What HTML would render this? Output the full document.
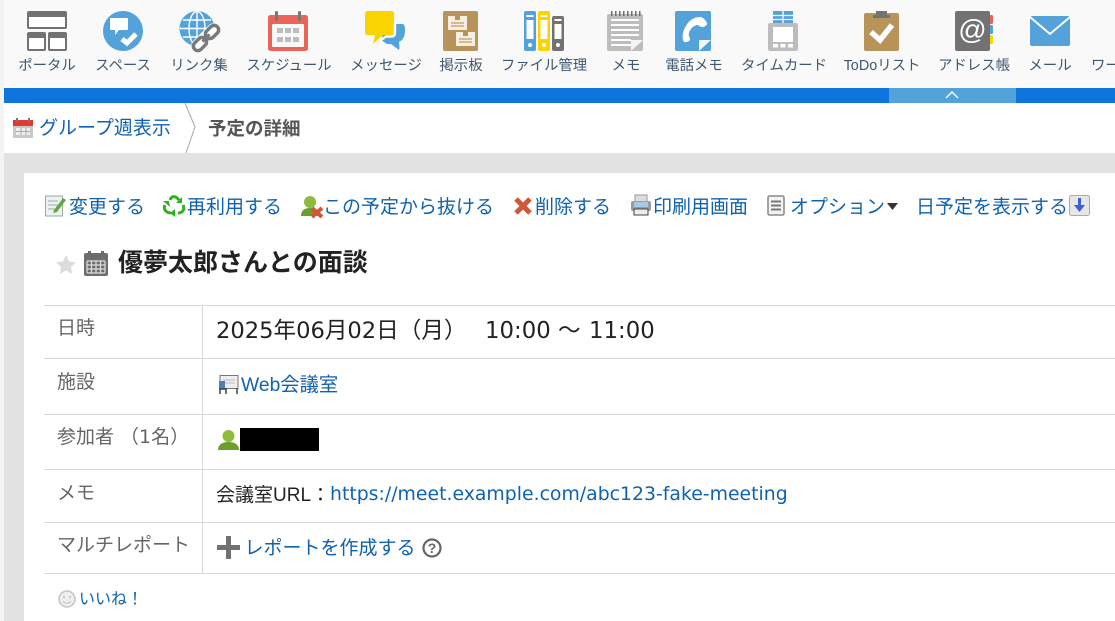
<!DOCTYPE html>
<html lang="ja"><head><meta charset="utf-8"><title>予定の詳細</title>
<style>
html,body{margin:0;padding:0;width:1115px;height:621px;overflow:hidden;background:#fff}
body{position:relative;font-family:"Liberation Sans","Noto Sans CJK JP",sans-serif}
.a{position:absolute}
.t{position:absolute;white-space:nowrap;line-height:1}
.n{font-size:14.4px;color:#3f5870;top:59px;transform:translateX(-50%)}
.l{color:#0f62b0}
.b{font-size:19px;top:198px;color:#0f62b0}
.h{font-size:19px;color:#666;left:57px}
.r{position:absolute;left:44px;width:1071px;height:1px;background:#d9d9d9}
.d{font-family:"DejaVu Sans","Noto Sans CJK JP",sans-serif}
svg{position:absolute;overflow:visible}
</style></head><body>
<div class="a" style="left:0;top:0;width:4px;height:621px;background:#f4f4f4"></div>
<div class="a" style="left:4px;top:0;width:1111px;height:88px;background:#f9f9f9"></div>
<div class="a" style="left:4px;top:88px;width:1111px;height:15px;background:#0e74de"></div>
<div class="a" style="left:889px;top:88px;width:127px;height:15px;background:#53a2da"></div>
<svg style="left:945px;top:90px" width="14" height="9"><path d="M1 8L7 2L13 8" fill="none" stroke="#fff" stroke-width="1.4"/></svg>
<div class="a" style="left:4px;top:153px;width:1111px;height:468px;background:#e2e2e2"></div>
<div class="a" style="left:24px;top:173px;width:1091px;height:448px;background:#fff"></div>

<!-- nav icons -->
<svg style="left:27px;top:11px" width="40" height="40"><rect width="40" height="18" rx="2" fill="#727272"/><rect x="2" y="6" width="36" height="10" fill="#fff"/><rect y="21" width="19" height="19" rx="2" fill="#727272"/><rect x="2" y="27" width="15" height="11" fill="#fff"/><rect x="21" y="21" width="19" height="19" rx="2" fill="#727272"/><rect x="23" y="27" width="15" height="11" fill="#fff"/></svg>
<svg style="left:103px;top:11px" width="40" height="40"><circle cx="20" cy="20" r="20" fill="#53a2da"/><path d="M8 7h16a1 1 0 0 1 1 1v10a1 1 0 0 1-1 1h-8l-4 5v-5H8a1 1 0 0 1-1-1V8a1 1 0 0 1 1-1z" fill="#fff"/><path d="M19 28l5 4 9-9" fill="none" stroke="#fff" stroke-width="5"/></svg>
<svg style="left:179px;top:11px" width="42" height="41"><circle cx="18" cy="17.500" r="17.500" fill="#53a2da"/><g fill="none" stroke="#fff" stroke-width="1.400"><ellipse cx="18" cy="17.500" rx="8" ry="17"/><path d="M18 0v35M1 17.500h34M4 9h28M4 26h28"/></g><g transform="rotate(-45 27 27)"><rect x="9" y="20" width="36" height="14" rx="7" fill="#fff"/><rect x="11" y="22.500" width="15" height="9" rx="4.500" fill="none" stroke="#7a7a7a" stroke-width="3.500"/><rect x="28" y="22.500" width="15" height="9" rx="4.500" fill="none" stroke="#7a7a7a" stroke-width="3.500"/><rect x="22" y="25.500" width="10" height="3" fill="#7a7a7a"/></g></svg>
<svg style="left:268px;top:11px" width="40" height="41"><rect y="4" width="40" height="36" rx="2.500" fill="#e9655a"/><rect x="4" y="13" width="32" height="23" rx="1" fill="#f8f8f8"/><rect x="7" y="0" width="3" height="10" rx="1.500" fill="#777"/><rect x="30" y="0" width="3" height="10" rx="1.500" fill="#777"/><g fill="#bdbdbd"><rect x="9" y="17" width="6" height="5"/><rect x="17" y="17" width="6" height="5"/><rect x="25" y="17" width="6" height="5"/><rect x="9" y="26" width="6" height="5"/><rect x="17" y="26" width="6" height="5"/><rect x="25" y="26" width="6" height="5"/></g></svg>
<svg style="left:365px;top:11px" width="41" height="41"><path d="M20 18l8-5h9c3 0 3 4 3 7 0 5-2 9-6 11 0 2 1 6 0 8l-8-6h-4l-6-4z" fill="#53a2da"/><path d="M3 0h23q3 0 3 3v18q0 3-3 3H18L8 33l2-9H3q-3 0-3-3V3q0-3 3-3z" fill="#f9d400"/><path d="M9 34L21 25.500h5q4 0 4-4V12" fill="none" stroke="#f9f9f9" stroke-width="2.500"/></svg>
<svg style="left:443px;top:11px" width="36" height="40"><rect width="35" height="40" rx="2" fill="#b8935a"/><rect x="5" y="5" width="19" height="14" fill="#f5efe1"/><path d="M12 5h5v4h-5z" fill="#b8935a"/><path d="M8 12h13M8 15h13" stroke="#c9a975" stroke-width="1.500"/><rect x="13" y="21" width="19" height="14" fill="#f5efe1"/><path d="M20 21h5v4h-5z" fill="#b8935a"/><path d="M16 28h13M16 31h13" stroke="#c9a975" stroke-width="1.500"/></svg>
<svg style="left:524px;top:11px" width="40" height="41"><rect width="12" height="40" rx="2" fill="#53a2da"/><rect x="14" width="12" height="40" rx="2" fill="#f9d400"/><rect x="28" y="5" width="12" height="35" rx="2" fill="#727272"/><g fill="#fff"><rect x="2.500" y="4" width="7" height="2"/><rect x="2.500" y="9" width="7" height="19"/><circle cx="6" cy="34" r="2"/><rect x="16.500" y="4" width="7" height="2"/><rect x="16.500" y="9" width="7" height="19"/><circle cx="20" cy="34" r="2"/><rect x="30.500" y="8" width="7" height="2"/><rect x="30.500" y="13" width="7" height="15"/><circle cx="34" cy="34" r="2"/></g></svg>
<svg style="left:607px;top:11px" width="36" height="41"><rect y="3" width="36" height="37" rx="2" fill="#bdbdbd"/><g fill="#6d6d6d"><rect x="4" y="0" width="1.500" height="5"/><rect x="8" y="0" width="1.500" height="5"/><rect x="12" y="0" width="1.500" height="5"/><rect x="16" y="0" width="1.500" height="5"/><rect x="20" y="0" width="1.500" height="5"/><rect x="24" y="0" width="1.500" height="5"/><rect x="28" y="0" width="1.500" height="5"/><rect x="32" y="0" width="1.500" height="5"/></g><path d="M4 9h28M4 14h28M4 19h28M4 24h28M4 29h20M4 34h20" stroke="#fff" stroke-width="2"/><path d="M24 29h12L24 40z" fill="#f4f4f4"/></svg>
<svg style="left:675px;top:11px" width="36" height="41"><rect width="36" height="40" rx="2" fill="#53a2da"/><path d="M25 6c-9 0-15 8-17 16-1 5 0 9 2 9 3 0 5-1 5-3 0-2-2-3-1-6 1-4 4-7 8-8 2 0 3 2 5 2 2 0 4-1 5-3 0-3-4-7-7-7z" fill="#fff"/><path d="M24 29h12L24 40z" fill="#f4f4f4"/></svg>
<svg style="left:768px;top:11px" width="30" height="41"><rect x="5" y="0" width="20" height="15" fill="#53a2da"/><path d="M15 0v14M5 4.500h20M5 8.500h20" stroke="#fff" stroke-width="1.300"/><rect y="12" width="30" height="28" rx="2" fill="#bdbdbd"/><rect x="5" y="16" width="20" height="15" fill="#fff"/><g fill="#fff"><rect x="5" y="33" width="5" height="3.500"/><rect x="12.500" y="33" width="5" height="3.500"/><rect x="20" y="33" width="5" height="3.500"/></g></svg>
<svg style="left:864px;top:11px" width="36" height="41"><rect y="2" width="35" height="38" rx="2" fill="#b8935a"/><path d="M12 4V0h11v4h3v3H9V4z" fill="#727272"/><path d="M7 21l9 8 12-15" fill="none" stroke="#fff" stroke-width="5.500"/></svg>
<svg style="left:955px;top:11px" width="38" height="41"><rect x="33" y="4" width="5" height="9" rx="1.500" fill="#e9655a"/><rect x="33" y="14" width="5" height="9" rx="1.500" fill="#53a2da"/><rect x="33" y="24" width="5" height="9" rx="1.500" fill="#f9d400"/><rect width="35" height="40" rx="2" fill="#727272"/><text x="17.500" y="28" font-family="Liberation Sans" font-size="28" fill="#fff" text-anchor="middle">@</text></svg>
<svg style="left:1030px;top:16px" width="40" height="30"><rect width="40" height="30" rx="2" fill="#53a2da"/><path d="M0 1l20 17L40 1" fill="none" stroke="#fff" stroke-width="2"/></svg>

<!-- nav labels -->
<span class="t n" style="left:47px">ポータル</span>
<span class="t n" style="left:123px">スペース</span>
<span class="t n" style="left:199px">リンク集</span>
<span class="t n" style="left:289px">スケジュール</span>
<span class="t n" style="left:386px">メッセージ</span>
<span class="t n" style="left:461px">掲示板</span>
<span class="t n" style="left:544px">ファイル管理</span>
<span class="t n" style="left:626px">メモ</span>
<span class="t n" style="left:694px">電話メモ</span>
<span class="t n" style="left:784px">タイムカード</span>
<span class="t n" style="left:882px">ToDoリスト</span>
<span class="t n" style="left:974px">アドレス帳</span>
<span class="t n" style="left:1050px">メール</span>
<div class="a" style="left:1091px;top:55px;width:24px;height:22px;overflow:hidden"><span class="t n" style="left:0;top:4px;transform:none">ワー</span></div>

<!-- breadcrumb -->
<svg style="left:13px;top:118px" width="21" height="21"><rect y="2" width="20" height="18" fill="#c9c9c9"/><rect y="2" width="20" height="6" fill="#e23a32"/><rect x="3" y="0" width="2" height="4" fill="#777"/><rect x="15" y="0" width="2" height="4" fill="#777"/><rect x="3" y="10" width="14" height="7" fill="#eee"/><path d="M3 13.500h14M8 10v7M13 10v7" stroke="#aaa"/></svg>
<span class="t l" style="left:39px;top:119px;font-size:19px">グループ週表示</span>
<svg style="left:185px;top:103px" width="12" height="50"><path d="M0 0L10 24L1 50" fill="none" stroke="#a8a8a8"/></svg>
<span class="t" style="left:208px;top:120px;font-size:18.500px;font-weight:700;color:#555">予定の詳細</span>

<!-- toolbar icons -->
<svg style="left:45px;top:195px" width="23" height="22"><rect x="0.500" y="1" width="17" height="20" fill="#eef2f0" stroke="#9aa8a5"/><path d="M3 6h10M3 10h10M3 14h10" stroke="#9aa"/><path d="M9 15l9-12 3 2-9 12-4 1z" fill="#62a83d"/></svg>
<svg style="left:163px;top:194px" width="22" height="23"><path d="M7 6c2-5 6-4 9 0M20 11c2 4 0 8-5 8M8 19c-5 0-8-4-6-8" fill="none" stroke="#2fb01f" stroke-width="3"/><path d="M19 3v6h-6zM12 15v8l-5-4zM0 7l6 0 1 6z" fill="#2fb01f"/></svg>
<svg style="left:300px;top:195px" width="24" height="24"><circle cx="10" cy="7" r="6" fill="#8dbb3c"/><path d="M1 21c0-6 4-8 9-8s9 2 9 8z" fill="#6b9e2b"/><path d="M12 13l10 9M22 13l-10 9" stroke="#d2563a" stroke-width="4"/></svg>
<svg style="left:514px;top:197px" width="18" height="18"><path d="M2 2l14 14M16 2L2 16" stroke="#d2563a" stroke-width="5"/></svg>
<svg style="left:631px;top:195px" width="20" height="21"><rect x="4" y="0" width="12" height="7" fill="#ddd" stroke="#999"/><rect y="6" width="20" height="10" rx="2" fill="#9a9a9a"/><rect x="3" y="7" width="14" height="5" fill="#a9c8e4"/><rect x="3" y="14" width="14" height="6" fill="#eee" stroke="#444"/></svg>
<svg style="left:767px;top:195px" width="18" height="21"><rect x="1" y="1" width="16" height="19" rx="1.500" fill="#f3f3f3" stroke="#888" stroke-width="1.500"/><path d="M4 6.500h10M4 10.500h10M4 14.500h10" stroke="#777" stroke-width="2"/></svg>
<svg style="left:887px;top:203px" width="12" height="7"><path d="M0 0h11L5.500 7z" fill="#333"/></svg>
<svg style="left:1069px;top:195px" width="21" height="21"><rect x="0.500" y="0.500" width="20" height="20" rx="2" fill="#e6e6e6" stroke="#aaa"/><path d="M5 10h11l-5.500 7z" fill="#3d5fd9"/><rect x="9" y="3" width="3" height="8" fill="#3d5fd9"/></svg>

<!-- toolbar -->
<span class="t b" style="left:69px">変更する</span>
<span class="t b" style="left:187px">再利用する</span>
<span class="t b" style="left:323px">この予定から抜ける</span>
<span class="t b" style="left:535px">削除する</span>
<span class="t b" style="left:653px">印刷用画面</span>
<span class="t b" style="left:790px">オプション</span>
<span class="t b" style="left:916px">日予定を表示する</span>

<!-- title -->
<svg style="left:56px;top:255px" width="20" height="20"><path d="M10 0l3 6.500 7 .8-5 4.700 1.300 7L10 15.500 3.700 19 5 12 0 7.300l7-.8z" fill="#dcdcdc"/></svg>
<svg style="left:84px;top:251px" width="24" height="25"><rect y="2" width="24" height="23" rx="2" fill="#6c6c6c"/><rect x="4" y="0" width="3" height="5" fill="#6c6c6c"/><rect x="17" y="0" width="3" height="5" fill="#6c6c6c"/><path d="M3 10h18M3 14h18M3 18h18M3 22h18M3 10v12M7.500 10v12M12 10v12M16.500 10v12M21 10v12" stroke="#ddd" stroke-width="1.200" fill="none"/></svg>
<span class="t" style="left:118px;top:251px;font-size:25px;font-weight:700;color:#222">優夢太郎さんとの面談</span>

<!-- table -->
<div class="r" style="top:305px"></div>
<div class="r" style="top:358px"></div>
<div class="r" style="top:414px"></div>
<div class="r" style="top:469px"></div>
<div class="r" style="top:522px"></div>
<div class="r" style="top:573px"></div>
<div class="a" style="left:202px;top:305px;width:1px;height:268px;background:#d9d9d9"></div>

<span class="t h" style="top:319px">日時</span>
<span class="t h" style="top:373px">施設</span>
<span class="t h d" style="top:428px">参加者 （1名）</span>
<span class="t h" style="top:484px">メモ</span>
<span class="t h" style="top:536px">マルチレポート</span>

<span class="t d" style="left:216px;top:320px;font-size:22.600px;color:#222">2025年06月02日（月）</span>
<span class="t d" style="left:485px;top:320px;font-size:22.800px;color:#222">10:00</span>
<span class="t d" style="left:558px;top:320px;font-size:22.600px;color:#222">～</span>
<span class="t d" style="left:589px;top:320px;font-size:22.800px;color:#222">11:00</span>

<svg style="left:218px;top:375px" width="21" height="20"><rect x="2" y="0.500" width="18" height="13" fill="#eee" stroke="#777"/><path d="M5 5h12M5 8h12" stroke="#bbb"/><rect x="1" y="6" width="6" height="7" fill="#4a7fc4"/><path d="M1 14h8M2 14v5M8 14v5M19 13v6" stroke="#444" stroke-width="1.500"/></svg>
<span class="t l" style="left:241px;top:376px;font-size:19.300px">Web会議室</span>

<svg style="left:218px;top:429px" width="21" height="21"><circle cx="10.500" cy="7" r="6" fill="#8dbb3c"/><path d="M0 21c0-6 5-8 10.500-8S21 15 21 21z" fill="#6b9e2b"/></svg>
<div class="a" style="left:240px;top:428px;width:79px;height:23px;background:#000"></div>

<span class="t" style="left:216px;top:486px;font-size:19px;color:#222">会議室URL：</span>
<span class="t l d" style="left:330px;top:486px;font-size:18.850px">https://meet.example.com/abc123-fake-meeting</span>

<svg style="left:217px;top:536px" width="23" height="23"><path d="M9 0h5v9h9v5h-9v9H9v-9H0V9h9z" fill="#727272"/></svg>
<span class="t l" style="left:244.500px;top:539px;font-size:19px">レポートを作成する</span>
<svg style="left:422px;top:538px" width="20" height="20"><circle cx="10" cy="10" r="8.500" fill="none" stroke="#666" stroke-width="2.200"/><text x="10" y="15" font-family="Liberation Sans" font-size="14" font-weight="700" fill="#666" text-anchor="middle">?</text></svg>

<svg style="left:58px;top:590px" width="18" height="18"><circle cx="9" cy="9" r="8" fill="#eee" stroke="#c4c4c4" stroke-width="1.500"/><circle cx="6" cy="7" r="1" fill="#bbb"/><circle cx="12" cy="7" r="1" fill="#bbb"/><path d="M5 11c2 3 6 3 8 0" fill="none" stroke="#bbb"/></svg>
<span class="t l" style="left:79px;top:592px;font-size:16px">いいね！</span>
</body></html>
